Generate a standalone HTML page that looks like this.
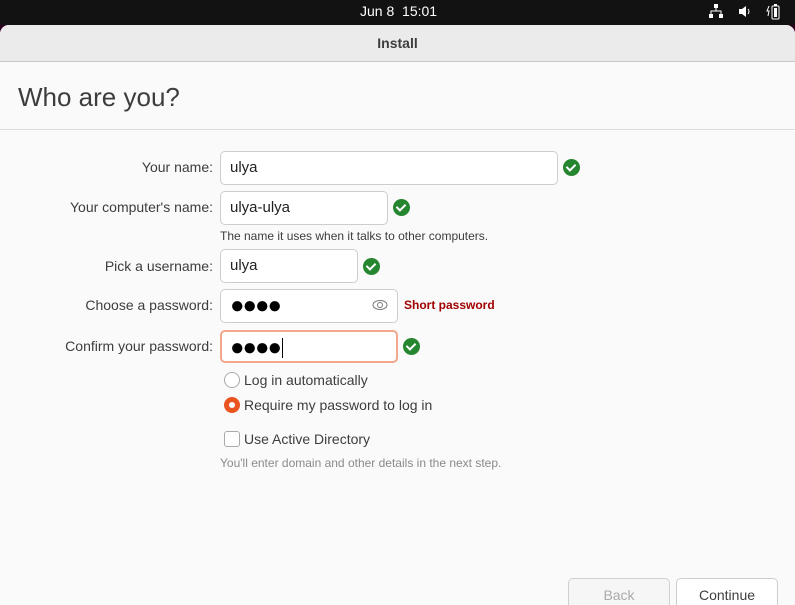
<!DOCTYPE html>
<html><head><style>
*{box-sizing:border-box;margin:0;padding:0}
body{width:795px;height:596px;background:#2c001e;font-family:"Liberation Sans",sans-serif;position:relative;overflow:hidden}
.top{position:absolute;left:0;top:0;width:795px;height:25px;background:#121212;color:#fff;font-size:14px}
.win{position:absolute;left:0;top:25px;width:795px;height:580px;background:#fafafa;border-radius:9px 9px 0 0;overflow:hidden}
.hdr{height:37px;background:#ebebeb;border-bottom:1px solid #c8c8c8;text-align:center;font-weight:bold;font-size:14px;color:#3d3d3d;line-height:37px}
.a{position:absolute}
.lbl{position:absolute;right:582px;font-size:14px;color:#3d3d3d;white-space:nowrap}
.in{position:absolute;left:220px;background:#fff;border:1px solid #cdcdcd;border-radius:5px;font-size:15px;color:#222;padding-left:9px;line-height:31px}
.ok{position:absolute;width:17px;height:17px;border-radius:50%;background:#26852f}
.ok:after{content:"";position:absolute;left:5px;top:3px;width:4px;height:7px;border:solid #fff;border-width:0 2px 2px 0;transform:rotate(45deg)}
.dots{font-size:24px;letter-spacing:-2px;color:#000}
</style></head><body>
<div class="top"><div class="a" style="left:360px;top:3px">Jun 8&nbsp; 15:01</div>
<div class="a" style="left:709px;top:4px;width:14px;height:14px">
<svg width="14" height="14"><rect x="5" y="0" width="4" height="4" fill="#fff"/><rect x="0" y="10" width="4" height="4" fill="#fff"/><rect x="10" y="10" width="4" height="4" fill="#fff"/><path d="M7 4v3M2 10V7h10v3" stroke="#fff" fill="none"/></svg></div>
<div class="a" style="left:738px;top:5px"><svg width="14" height="13"><path d="M1 4h3l4-3v11l-4-3H1z" fill="#fff"/><path d="M10 4q2 2.5 0 5" stroke="#fff" fill="none"/></svg></div>
<div class="a" style="left:766px;top:3px"><svg width="14" height="18"><path d="M3 3l-2 5h2l-1 5" stroke="#fff" fill="none"/><rect x="6" y="3" width="7" height="13" rx="1" stroke="#fff" fill="none"/><rect x="8" y="1" width="3" height="2" fill="#fff"/><rect x="8" y="5" width="3" height="9" fill="#fff"/></svg></div>
</div>
<div class="win">
<div class="hdr">Install</div>
<div class="a" style="left:18px;top:57px;font-size:26px;color:#3d3d3d">Who are you?</div>
<div class="a" style="left:0;top:104px;width:795px;height:1px;background:#dcdcdc"></div>

<div class="lbl" style="top:134px">Your name:</div>
<div class="in" style="top:126px;width:338px;height:34px">ulya</div>
<div class="ok" style="left:563px;top:134px"></div>

<div class="lbl" style="top:174px">Your computer's name:</div>
<div class="in" style="top:166px;width:168px;height:34px">ulya-ulya</div>
<div class="ok" style="left:393px;top:174px"></div>
<div class="a" style="left:220px;top:204px;font-size:12px;color:#3d3d3d">The name it uses when it talks to other computers.</div>

<div class="lbl" style="top:233px">Pick a username:</div>
<div class="in" style="top:224px;width:138px;height:34px">ulya</div>
<div class="ok" style="left:363px;top:233px"></div>

<div class="lbl" style="top:272px">Choose a password:</div>
<div class="in dots" style="top:264px;width:178px;height:34px">●●●●</div>
<div class="a" style="left:372px;top:273px"><svg width="16" height="14"><ellipse cx="8" cy="7" rx="7" ry="4.5" stroke="#777" fill="none"/><circle cx="8" cy="7" r="2.5" stroke="#777" fill="none"/></svg></div>
<div class="a" style="left:404px;top:273px;font-size:12px;font-weight:bold;color:#a00000">Short password</div>

<div class="lbl" style="top:313px">Confirm your password:</div>
<div class="in dots" style="top:305px;width:178px;height:33px;border:2px solid #f2a88c;padding-left:8px">●●●●<span style="display:inline-block;width:1px;height:20px;background:#000;vertical-align:-3px;margin-left:2px"></span></div>
<div class="ok" style="left:403px;top:313px"></div>

<div class="a" style="left:224px;top:347px;width:16px;height:16px;border:1px solid #aaa;border-radius:50%;background:#fff"></div>
<div class="a" style="left:244px;top:347px;font-size:14px;color:#3d3d3d">Log in automatically</div>
<div class="a" style="left:224px;top:372px;width:16px;height:16px;border-radius:50%;background:#e95420"><div style="position:absolute;left:5px;top:5px;width:6px;height:6px;border-radius:50%;background:#fff"></div></div>
<div class="a" style="left:244px;top:372px;font-size:14px;color:#3d3d3d">Require my password to log in</div>

<div class="a" style="left:224px;top:406px;width:16px;height:16px;border:1px solid #aaa;border-radius:3px;background:#fff"></div>
<div class="a" style="left:244px;top:406px;font-size:14px;color:#3d3d3d">Use Active Directory</div>
<div class="a" style="left:220px;top:431px;font-size:12px;color:#8a8a8a">You'll enter domain and other details in the next step.</div>

<div class="a" style="left:568px;top:553px;width:102px;height:40px;border:1px solid #d0d0d0;border-radius:5px;background:#f6f6f6;text-align:center;line-height:32px;font-size:14px;color:#aaa">Back</div>
<div class="a" style="left:676px;top:553px;width:102px;height:40px;border:1px solid #cdcdcd;border-radius:5px;background:#fff;text-align:center;line-height:32px;font-size:14px;color:#3d3d3d">Continue</div>
</div>
</body></html>
